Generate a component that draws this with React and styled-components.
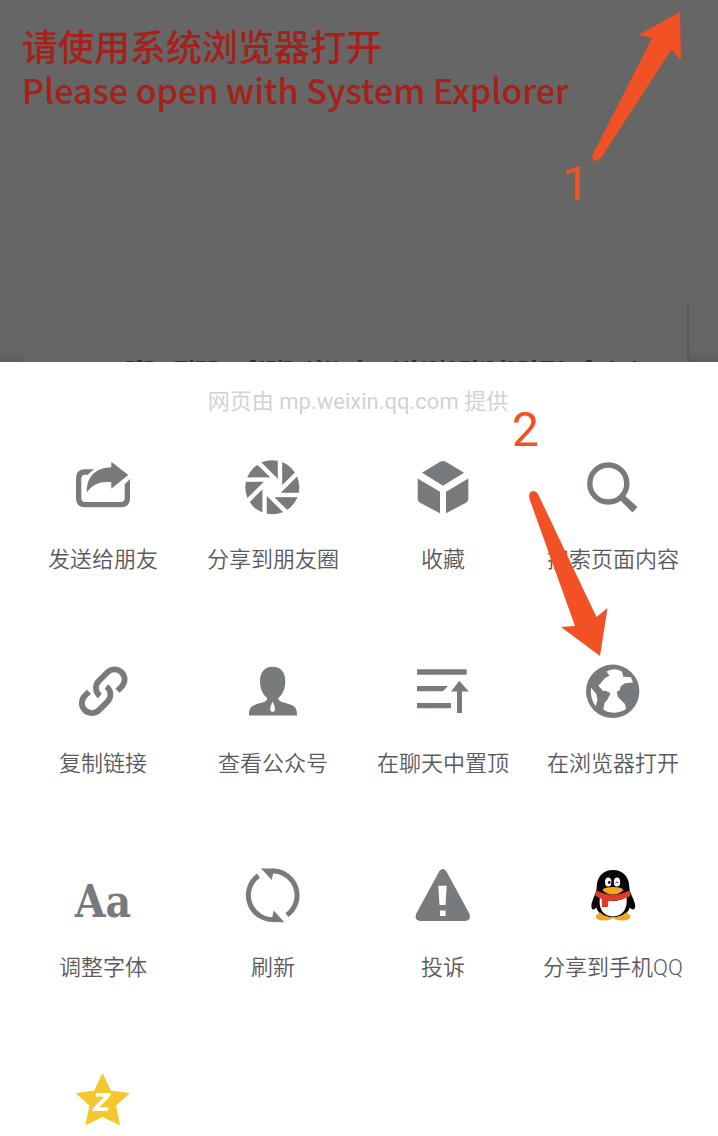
import React from "react";
import styled, { createGlobalStyle } from "styled-components";

const GlobalStyle = createGlobalStyle`
  * { box-sizing: border-box; }
  body {
    margin: 0;
    background: #ffffff;
    font-family: Roboto, "Noto Sans CJK SC", sans-serif;
  }
`;

const Page = styled.main`
  position: relative;
  min-height: 100vh;
  overflow: hidden;
  display: flex;
  flex-direction: column;
`;

const Backdrop = styled.header`
  height: 362px;
  flex: none;
  display: flex;
  flex-direction: column;
  justify-content: space-between;
  background: linear-gradient(#666666 348px, #5d5d5d 362px);
`;

const Notice = styled.h1`
  margin: 0;
  padding: 18px 22px 0;
  color: #a5211a;
  font-family: "Noto Sans CJK SC", sans-serif;
  font-weight: 500;
  font-size: 36px;
  line-height: 54px;
`;

const NoticeLine = styled.span`
  display: block;
`;

const LatinLine = styled(NoticeLine)`
  font-size: 34px;
  line-height: 36px;
`;

const DimmedCard = styled.div`
  height: 58px;
  margin: 0 29px 0 23px;
  border-right: 2px solid #595959;
  background: #666666;
  display: flex;
  align-items: flex-end;
  padding-left: 102px;
`;

const Sheet = styled.section`
  flex: 1;
  background: #ffffff;
  padding: 24px 20px 0 18px;
  display: flex;
  flex-direction: column;
  gap: 39px;
`;

const Provider = styled.p`
  margin: 0;
  text-align: center;
  font-size: 22px;
  line-height: 32px;
  color: #d2d2d2;
`;

const Grid = styled.ul`
  list-style: none;
  margin: 0;
  padding: 0;
  display: grid;
  grid-template-columns: repeat(4, minmax(0, 1fr));
  row-gap: 85px;
`;

const Cell = styled.li`
  display: flex;
  justify-content: center;
`;

const Action = styled.button`
  border: 0;
  padding: 0;
  background: none;
  color: #5a5a5a;
  font-family: inherit;
  font-size: 22px;
  font-weight: 350;
  line-height: 32px;
  white-space: nowrap;
  display: flex;
  flex-direction: column;
  align-items: center;
  gap: 27px;
  cursor: pointer;
`;

const Icon = styled.svg`
  display: block;
  width: 60px;
  height: 60px;
  overflow: visible;
  fill: #777b7d;
`;

const Pointer = styled.svg`
  position: absolute;
  top: ${(p) => p.$top}px;
  right: ${(p) => p.$right}px;
  fill: #f15125;
  pointer-events: none;
`;

const Step = styled.span`
  position: absolute;
  top: ${(p) => p.$top}px;
  right: ${(p) => p.$right}px;
  color: #f15125;
  font-size: 48px;
  line-height: 48px;
  pointer-events: none;
`;

const g = "#777b7d";

const icons = {
  share: (
    <>
      <path d="M21 12.3H12Q3 12.3 3 21.3V41.5Q3 50.3 12 50.3H48Q57 50.3 57 41.5V22L51.7 27.3V41Q51.7 45 48 45H12Q8.3 45 8.3 41V21.5Q8.3 17.7 12 17.7H14.7Z" />
      <path d="M38.3 4.7L55.3 18L38.3 31.7V25.3C28 24 19.5 27 13.8 35.5C13.5 20 22 11 38.3 10.3Z" />
    </>
  ),
  moments: (
    <g transform="translate(29.3 30.3)">
      <circle r="27" />
      <circle r="9.5" fill="#fff" />
      {[0, 45, 90, 135, 180, 225, 270, 315].map((a) => (
        <path key={a} d="M7.7 -29V2" stroke="#fff" strokeWidth="4.4" transform={`rotate(${a})`} />
      ))}
    </g>
  ),
  cube: (
    <>
      <path d="M27.5 4.6Q30 3.2 32.5 4.6L51 15.8L30 28.7L9 15.8Z" />
      <path d="M4.7 21.5L27 34.8V56.3L7 45.8Q4.7 44.5 4.7 42Z" />
      <path d="M55.3 21.5L33 34.8V56.3L53 45.8Q55.3 44.5 55.3 42Z" />
    </>
  ),
  search: (
    <>
      <circle cx="25.3" cy="26.5" r="18.5" fill="none" stroke={g} strokeWidth="5.4" />
      <path d="M36 41L40 37L54.5 50L49.5 55.5L37.5 43.5Z" />
    </>
  ),
  link: (
    <g fill="none" stroke={g} strokeWidth="5.8">
      <path d="M44.5 29.7L48.6 25.6A10 10 0 0 0 34.4 11.4L25.9 19.9A10 10 0 0 0 27 35" />
      <path d="M15.9 30.8L11.8 34.9A10 10 0 0 0 26 49.1L34.5 40.6A10 10 0 0 0 33.4 25.5" />
    </g>
  ),
  person: (
    <>
      <path d="M29.7 5.7C38 5.7 42.3 11.5 42.3 20C42.3 28 39.5 33.5 35.5 37V38.5C37 41.5 43 41.5 49.5 44.5C53.5 46.5 54 49.5 54 54.5H6C6 49.5 6.5 46.5 10.5 44.5C17 41.5 22.5 41.5 24 38.5V37C20 33.5 17 28 17 20C17 11.5 21.5 5.7 29.7 5.7Z" />
      <path d="M29.6 40.5Q34.5 50.8 29.6 51Q24.7 50.8 29.6 40.5Z" fill="#fff" />
    </>
  ),
  pin: (
    <>
      <path d="M4 8.2H53.7V13.7H4ZM4 25H35L30 30.2H4ZM4 42H38V47.2H4Z" />
      <path d="M46.3 19.7L55.7 30.4H49V52H44V30.4H38Z" />
    </>
  ),
  globe: (
    <>
      <circle cx="29.7" cy="30.3" r="26.7" />
      <path
        fill="#fff"
        d="M23.5 10.5Q28 8.3 32 8.3Q36 8.8 39 10.5L40.3 15.7L48 16.2L50 21.5L42 22.3L38 25L36.5 29.5L33.7 30.7L35 36L42 43L43 48Q38 51.5 30 51.7Q24 51.5 20.3 48.3L21.5 42L24.5 38.5L27.5 32.3L22.5 29.7L20 30L15.5 24.7L22 17L26.5 14.7Z"
      />
      <path fill="#fff" d="M8 26.7L13.3 33L14.5 39L12.5 45.5Q7 37 8 26.7Z" />
    </>
  ),
  font: (
    <text
      x="30"
      y="52"
      textAnchor="middle"
      fontFamily='"DejaVu Serif Condensed", "DejaVu Serif", serif'
      fontWeight="700"
      fontSize="44"
    >
      Aa
    </text>
  ),
  refresh: (
    <>
      <g fill="none" stroke={g} strokeWidth="5">
        <path d="M27.7 6.2A24.2 24.2 0 0 1 43.9 50" />
        <path d="M31.7 54.4A24.2 24.2 0 0 1 15.5 10.6" />
      </g>
      <path d="M18 3.3L31 3.7L30 9L28.7 15Z" />
      <path d="M41.4 57.3L28.4 56.9L29.4 51.6L30.7 45.6Z" />
    </>
  ),
  warning: (
    <>
      <path d="M26.4 6Q29.8 2.2 33.2 6L56.4 48.8Q58.5 55.2 52.5 56H7Q1 55.2 3.2 48.8Z" />
      <path d="M25.3 20.7H33.7L32.5 40H26.5ZM27 45.5H32.6V51H27Z" fill="#fff" />
    </>
  ),
  penguin: (
    <>
      <path
        fill="#050505"
        d="M30 5C40 5 46.3 12 46.3 22C46.3 28 52 35 52.2 40.5C52.3 44.5 50 46 46.8 42.5C45 49 38 52.5 30 52.5C22 52.5 15 49 13.3 42.5C10 46 8.2 44.5 8.4 40.5C8.7 35 13.7 28 13.7 22C13.7 12 20 5 30 5Z"
      />
      <path fill="#f5a623" d="M17 47.5Q12.5 49.5 12.8 52.5Q14 55.5 21 55.5Q28 55.5 29.8 52.5Q22 52 17 47.5Z" />
      <path fill="#f5a623" d="M43 47.5Q47.5 49.5 47.2 52.5Q46 55.5 39 55.5Q32 55.5 29.8 52.5Q38 52 43 47.5Z" />
      <path fill="#fff" d="M17 32Q30 40 43.5 32C45 43 40 51.5 30 51.5C20 51.5 15 43 17 32Z" />
      <path fill="#df3b2b" d="M13.5 25.5Q30 34 46.5 25.5L47.5 31Q36 37 25.5 35.5L24.8 42H18.8V34Q15 32.5 12.2 30.8Z" />
      <ellipse cx="25.2" cy="17" rx="3.2" ry="4.6" fill="#fff" />
      <ellipse cx="34" cy="17" rx="3.2" ry="4.6" fill="#fff" />
      <circle cx="26.3" cy="17.5" r="1.4" fill="#111" />
      <path d="M32.4 18Q33.6 15.6 35 18" fill="none" stroke="#111" strokeWidth="1" />
      <path d="M19.2 25Q21 22 30 22Q39 22 40.5 25Q36 29.5 30 29.5Q24 29.5 19.2 25Z" fill="#f5a623" />
    </>
  ),
  star: (
    <>
      <path
        fill="#f4c72f"
        stroke="#f4c72f"
        strokeLinejoin="round"
        d="M29.5 5L37.5 22L56 24.5L42.5 36.5L46.5 55.5L29.5 47.5L13 55.5L17 36.5L3.5 24.5L21.5 22Z"
      />
      <text
        x="29"
        y="42"
        textAnchor="middle"
        fill="#fff"
        fontFamily='"DejaVu Sans", sans-serif'
        fontWeight="700"
        fontStyle="italic"
        fontSize="24"
      >
        Z
      </text>
    </>
  ),
};

const actions = [
  ["share", "发送给朋友"],
  ["moments", "分享到朋友圈"],
  ["cube", "收藏"],
  ["search", "搜索页面内容"],
  ["link", "复制链接"],
  ["person", "查看公众号"],
  ["pin", "在聊天中置顶"],
  ["globe", "在浏览器打开"],
  ["font", "调整字体"],
  ["refresh", "刷新"],
  ["warning", "投诉"],
  ["penguin", "分享到手机QQ"],
  ["star", null],
];

// [x, width] of each stroke peeking above the sheet's edge
const peeks = [
  [1, 8], [12, 5], [20, 8], [50, 12], [65, 3], [71, 10], [84, 8], [125, 6], [135, 4],
  [142, 8], [154, 3], [159, 8], [183, 3], [192, 4], [201, 4], [210, 3], [233, 4],
  [269, 4], [280, 3], [287, 4], [297, 4], [306, 4], [316, 3], [325, 5], [335, 10],
  [348, 4], [356, 3], [362, 6], [376, 4], [384, 5], [394, 8], [407, 4], [416, 14],
  [434, 4], [461, 6], [485, 4], [508, 3],
];

export default function App() {
  return (
    <>
      <GlobalStyle />
      <Page>
        <Backdrop>
          <Notice>
            <NoticeLine>请使用系统浏览器打开</NoticeLine>
            <LatinLine>Please open with System Explorer</LatinLine>
          </Notice>
          <DimmedCard>
            <svg width="520" height="2" aria-hidden="true">
              {peeks.map(([x, w], i) => (
                <rect key={x} x={x} y={i % 3 === 1 ? 0 : 1} width={w} height="2" fill="#17403c" />
              ))}
            </svg>
          </DimmedCard>
        </Backdrop>
        <Sheet>
          <Provider>网页由 mp.weixin.qq.com 提供</Provider>
          <Grid>
            {actions.map(([icon, label]) => (
              <Cell key={icon}>
                <Action type="button" aria-label={label ? undefined : "QQ空间"}>
                  <Icon viewBox="0 0 60 60" aria-hidden="true">
                    {icons[icon]}
                  </Icon>
                  {label && <span>{label}</span>}
                </Action>
              </Cell>
            ))}
          </Grid>
        </Sheet>

        <Pointer $top={12} $right={36} width="90" height="150" viewBox="0 0 90 150" aria-hidden="true">
          <path d="M88 0L46 23L60 26L0.5 143Q-1 147 2.5 148.5Q6 150 9 146L79.5 37.5L89 48.5Z" />
        </Pointer>
        <Step $top={160} $right={129}>1</Step>
        <Pointer $top={490} $right={110} width="80" height="168" viewBox="0 0 80 168" aria-hidden="true">
          <path d="M1.5 9Q0 2.5 4.5 1Q8 0.5 10 4L68.5 127L79.5 118L72 166L33 137L47 136Z" />
        </Pointer>
        <Step $top={406} $right={179}>2</Step>
      </Page>
    </>
  );
}
